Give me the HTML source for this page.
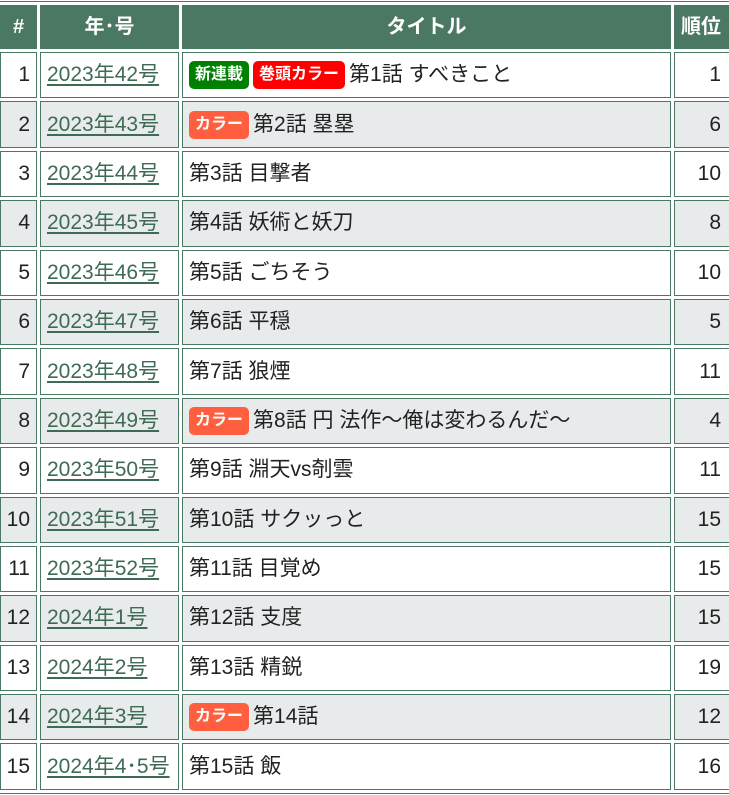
<!DOCTYPE html>
<html><head><meta charset="utf-8"><style>
body{margin:0;background:#fff;width:729px;height:795px;overflow:hidden;position:relative;font-family:"Liberation Sans","Noto Sans CJK JP",sans-serif;}
table{position:absolute;left:-4px;top:1px;border:1px solid #4a7862;border-spacing:3px;border-collapse:separate;table-layout:fixed;width:742px;}
td,th{border:1px solid #4a7862;padding:0 6px;font-size:21px;color:#222;height:46.4px;box-sizing:border-box;vertical-align:middle;line-height:24px;white-space:nowrap;overflow:hidden;}
th{background:#4a7862;color:#fff;font-weight:bold;height:44px;font-size:20px;}
tr:nth-child(odd) td{background:#e8ebec;}
td.n{text-align:right;padding:0 6px 0 0;}
td.r{text-align:right;padding-right:14px;}
a{color:#3f6b55;text-decoration:underline;text-underline-offset:3px;}
.b{display:inline-block;color:#fff;font-weight:bold;font-size:16px;padding:2px 6px;border-radius:5px;line-height:24px;vertical-align:2px;margin-right:4px}
.g{background:#008000}.rd{background:#ff0000}.o{background:#ff5f3f}
</style></head><body>
<table>
<colgroup><col style="width:37px"><col style="width:139px"><col style="width:489px"><col style="width:62px"></colgroup>
<tr><th style="padding:0">#</th><th>年･号</th><th>タイトル</th><th style="text-align:left;padding-left:6px">順位</th></tr>
<tr><td class="n">1</td><td><a>2023年42号</a></td><td><span class="b g">新連載</span><span class="b rd">巻頭カラー</span>第1話 すべきこと</td><td class="r">1</td></tr>
<tr><td class="n">2</td><td><a>2023年43号</a></td><td><span class="b o">カラー</span>第2話 塁塁</td><td class="r">6</td></tr>
<tr><td class="n">3</td><td><a>2023年44号</a></td><td>第3話 目撃者</td><td class="r">10</td></tr>
<tr><td class="n">4</td><td><a>2023年45号</a></td><td>第4話 妖術と妖刀</td><td class="r">8</td></tr>
<tr><td class="n">5</td><td><a>2023年46号</a></td><td>第5話 ごちそう</td><td class="r">10</td></tr>
<tr><td class="n">6</td><td><a>2023年47号</a></td><td>第6話 平穏</td><td class="r">5</td></tr>
<tr><td class="n">7</td><td><a>2023年48号</a></td><td>第7話 狼煙</td><td class="r">11</td></tr>
<tr><td class="n">8</td><td><a>2023年49号</a></td><td><span class="b o">カラー</span>第8話 円 法作〜俺は変わるんだ〜</td><td class="r">4</td></tr>
<tr><td class="n">9</td><td><a>2023年50号</a></td><td>第9話 淵天vs剞雲</td><td class="r">11</td></tr>
<tr><td class="n">10</td><td><a>2023年51号</a></td><td>第10話 サクッっと</td><td class="r">15</td></tr>
<tr><td class="n">11</td><td><a>2023年52号</a></td><td>第11話 目覚め</td><td class="r">15</td></tr>
<tr><td class="n">12</td><td><a>2024年1号</a></td><td>第12話 支度</td><td class="r">15</td></tr>
<tr><td class="n">13</td><td><a>2024年2号</a></td><td>第13話 精鋭</td><td class="r">19</td></tr>
<tr><td class="n">14</td><td><a>2024年3号</a></td><td><span class="b o">カラー</span>第14話</td><td class="r">12</td></tr>
<tr><td class="n">15</td><td><a>2024年4･5号</a></td><td>第15話 飯</td><td class="r">16</td></tr>
</table>
</body></html>
